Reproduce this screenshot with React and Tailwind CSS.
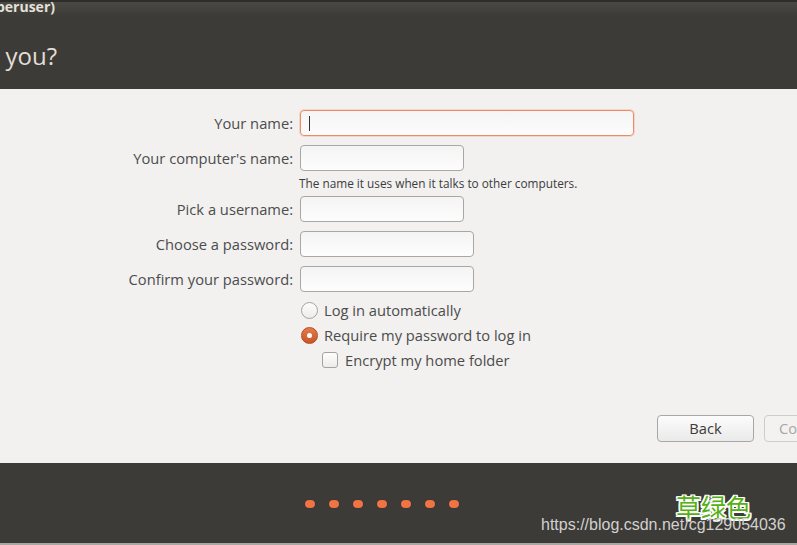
import React from "react";

const font = { fontFamily: '"Open Sans", "Noto Sans", sans-serif' };

function Field({ label, width, focused }) {
  return (
    <div className="flex items-center h-[26px]">
      <div className="w-[293px] whitespace-nowrap text-right text-[14.7px] leading-[20px] -mt-[1px] text-[#4c4c4c]">{label}</div>
      <div className="ml-[7px]">
        <div
          className={`h-[26px] rounded-[4px] border bg-gradient-to-b from-[#f4f4f4] to-[#fdfdfd] flex items-center pl-[8px] ${
            focused ? "border-[#ef8a64] shadow-[0_0_0_1px_rgba(240,140,100,0.25)]" : "border-[#a9a7a3]"
          }`}
          style={{ width }}
        >
          {focused && <div className="w-[1px] h-[15px] bg-[#333]" />}
        </div>
      </div>
    </div>
  );
}

function Radio({ checked, label }) {
  return (
    <div className="flex items-center h-[20px]">
      {checked ? (
        <div className="w-[17px] h-[17px] rounded-full bg-gradient-to-b from-[#e87b4a] to-[#c8552a] border border-[#b14c25] flex items-center justify-center">
          <div className="w-[5px] h-[5px] rounded-full bg-white" />
        </div>
      ) : (
        <div className="w-[17px] h-[17px] rounded-full bg-gradient-to-b from-[#fdfdfd] to-[#ececec] border border-[#a5a3a0]" />
      )}
      <span className="ml-[6px] text-[14.7px] text-[#4c4c4c]">{label}</span>
    </div>
  );
}

export default function App() {
  return (
    <div className="w-[797px] h-[545px] overflow-hidden flex flex-col bg-[#f2f1f0]" style={font}>
      {/* window header */}
      <div className="h-[89px] shrink-0 flex flex-col bg-[#3c3b37]">
        <div className="h-[2px] bg-[#2e2d2a]" />
        <div className="h-[14px] bg-gradient-to-b from-[#4a4944] to-[#3c3b37] flex">
          <div className="w-[55px] overflow-hidden flex justify-end">
            <span className="whitespace-nowrap text-[14px] font-bold leading-[10px] text-[#e4e1da]">Install (as superuser)</span>
          </div>
        </div>
        <div className="flex mt-[25px]">
          <div className="w-[57px] overflow-hidden flex justify-end">
            <span className="whitespace-nowrap text-[24px] leading-[30px] text-[#e2ded6]">Who are you?</span>
          </div>
        </div>
      </div>

      {/* form */}
      <div className="flex-1 flex flex-col">
        <div className="pt-[21px] flex flex-col">
          <Field label="Your name:" width={334} focused />
          <div className="h-[9px]" />
          <Field label="Your computer's name:" width={164} />
          <div className="pl-[299px] text-[11.8px] leading-[14px] mt-[5px] text-[#3c3c3c] whitespace-nowrap">
            The name it uses when it talks to other computers.
          </div>
          <div className="h-[6px]" />
          <Field label="Pick a username:" width={164} />
          <div className="h-[9px]" />
          <Field label="Choose a password:" width={174} />
          <div className="h-[9px]" />
          <Field label="Confirm your password:" width={174} />
          <div className="pl-[301px] mt-[8px] flex flex-col gap-[5px]">
            <Radio label="Log in automatically" />
            <Radio checked label="Require my password to log in" />
            <div className="flex items-center h-[20px] pl-[21px]">
              <div className="w-[16px] h-[16px] rounded-[3px] border border-[#a5a3a0] bg-gradient-to-b from-[#fdfdfd] to-[#ececec]" />
              <span className="ml-[7px] text-[14.7px] text-[#4c4c4c]">Encrypt my home folder</span>
            </div>
          </div>
        </div>
        <div className="flex-1" />
        <div className="flex pl-[657px] gap-[10px] mb-[21px]">
          <div className="w-[97px] h-[27px] shrink-0 rounded-[4px] border border-[#a9a7a3] bg-gradient-to-b from-[#fcfcfc] to-[#ebeaea] flex items-center justify-center text-[14.7px] text-[#3c3c3c]">
            Back
          </div>
          <div className="w-[97px] h-[27px] shrink-0 rounded-[4px] border border-[#cfcdca] bg-[#f3f2f1] flex items-center pl-[14px] text-[14.7px] text-[#a8a6a3]">
            Continue
          </div>
        </div>
      </div>

      {/* progress footer */}
      <div className="h-[82px] shrink-0 flex flex-col bg-[#3c3b37]">
        <div className="flex-1 relative">
          <div className="flex gap-[14px] pl-[305px] pt-[37px]">
            {[0, 1, 2, 3, 4, 5, 6].map((i) => (
              <div key={i} className="w-[10px] h-[8px] rounded-full bg-[#ee7443] shadow-[0_0_1px_rgba(0,0,0,0.6)]" />
            ))}
          </div>
          <div
            className="absolute left-[676px] top-[29px] text-[25px] leading-[28px] text-[#55b015]"
            style={{
              fontFamily: '"Noto Sans CJK SC", sans-serif',
              textShadow:
                "1.5px 1.5px 0 #fff, -1.5px -1.5px 0 #fff, 1.5px -1.5px 0 #fff, -1.5px 1.5px 0 #fff, 0 1.5px 0 #fff, 0 -1.5px 0 #fff, 1.5px 0 0 #fff, -1.5px 0 0 #fff",
            }}
          >
            草绿色
          </div>
          <div
            className="absolute left-[541px] top-[53px] text-[16px] leading-[18px] text-[#d2d1cf]"
            style={{ fontFamily: '"Liberation Sans", Arial, sans-serif' }}
          >
            https://blog.csdn.net/cg129054036
          </div>
        </div>
        <div className="h-[2px] bg-[#a9a7a2]" />
      </div>
    </div>
  );
}
